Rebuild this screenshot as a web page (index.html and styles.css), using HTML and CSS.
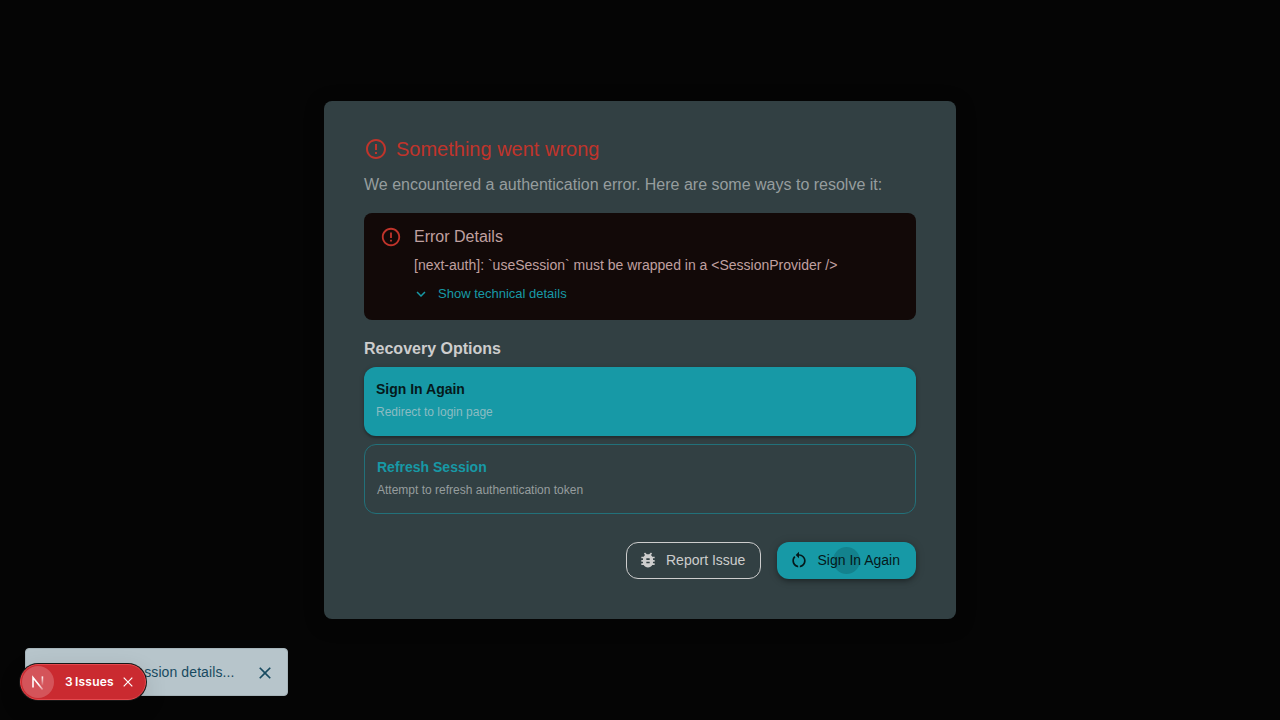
FILE: index.html
```
<!DOCTYPE html>
<html lang="en">
<head>
<meta charset="utf-8">
<title>Something went wrong</title>
<link rel="stylesheet" href="styles.css">
</head>
<body>
<main class="dialog">
  <h1 class="title">
    <svg class="title-icon" viewBox="0 0 24 24"><path d="M11 15h2v2h-2zm0-8h2v6h-2zm.99-5C6.47 2 2 6.48 2 12s4.47 10 9.99 10C17.52 22 22 17.52 22 12S17.52 2 11.99 2M12 20c-4.42 0-8-3.58-8-8s3.58-8 8-8 8 3.58 8 8-3.58 8-8 8"/></svg>
    <span>Something went wrong</span>
  </h1>
  <p class="lead">We encountered a authentication error. Here are some ways to resolve it:</p>
  <section class="alert">
    <svg class="alert-icon" viewBox="0 0 24 24"><path d="M11 15h2v2h-2zm0-8h2v6h-2zm.99-5C6.47 2 2 6.48 2 12s4.47 10 9.99 10C17.52 22 22 17.52 22 12S17.52 2 11.99 2M12 20c-4.42 0-8-3.58-8-8s3.58-8 8-8 8 3.58 8 8-3.58 8-8 8"/></svg>
    <div class="alert-body">
      <h2 class="alert-title">Error Details</h2>
      <p class="alert-text">[next-auth]: `useSession` must be wrapped in a &lt;SessionProvider /&gt;</p>
      <button class="details">
        <svg class="details-icon" viewBox="0 0 24 24"><path d="M16.59 8.59 12 13.17 7.41 8.59 6 10l6 6 6-6z"/></svg>
        <span>Show technical details</span>
      </button>
    </div>
  </section>
  <h2 class="options-title">Recovery Options</h2>
  <div class="options">
    <button class="option option-primary"><span class="option-name">Sign In Again</span><span class="option-note">Redirect to login page</span></button>
    <button class="option option-outlined"><span class="option-name">Refresh Session</span><span class="option-note">Attempt to refresh authentication token</span></button>
  </div>
  <footer class="actions">
    <button class="action report">
      <svg class="action-icon" viewBox="0 0 24 24"><path d="M20 8h-2.81c-.45-.78-1.07-1.45-1.82-1.96L17 4.41 15.59 3l-2.17 2.17C12.96 5.06 12.49 5 12 5s-.96.06-1.41.17L8.41 3 7 4.41l1.62 1.63C7.88 6.55 7.26 7.22 6.81 8H4v2h2.09c-.05.33-.09.66-.09 1v1H4v2h2v1c0 .34.04.67.09 1H4v2h2.81c1.04 1.79 2.97 3 5.19 3s4.15-1.21 5.19-3H20v-2h-2.09c.05-.33.09-.66.09-1v-1h2v-2h-2v-1c0-.34-.04-.67-.09-1H20zm-6 8h-4v-2h4zm0-4h-4v-2h4z"/></svg>
      <span>Report Issue</span>
    </button>
    <button class="action signin">
      <svg class="action-icon" viewBox="0 0 24 24"><path d="M12 5V2L8 6l4 4V7c3.31 0 6 2.69 6 6 0 2.97-2.17 5.43-5 5.91v2.02c3.95-.49 7-3.85 7-7.93 0-4.42-3.58-8-8-8m-6 8c0-1.65.67-3.15 1.76-4.24L6.34 7.34C4.9 8.79 4 10.79 4 13c0 4.08 3.05 7.44 7 7.93v-2.02c-2.83-.48-5-2.94-5-5.91"/></svg>
      <span>Sign In Again</span>
      <i class="ripple"></i>
    </button>
  </footer>
</main>
<aside class="toast">
  <span class="toast-text">ssion details...</span>
  <svg class="toast-close" viewBox="0 0 24 24"><path d="M19 6.41 17.59 5 12 10.59 6.41 5 5 6.41 10.59 12 5 17.59 6.41 19 12 13.41 17.59 19 19 17.59 13.41 12z"/></svg>
</aside>
<aside class="issues">
  <span class="issues-logo">
    <svg viewBox="0 0 32 32">
      <defs>
        <linearGradient id="diag" x1="17" y1="18" x2="22" y2="24" gradientUnits="userSpaceOnUse"><stop offset="0" stop-color="#fff"/><stop offset="1" stop-color="#fff" stop-opacity=".2"/></linearGradient>
        <linearGradient id="stem" x1="0" y1="10" x2="0" y2="20" gradientUnits="userSpaceOnUse"><stop offset="0" stop-color="#fff"/><stop offset="1" stop-color="#fff" stop-opacity="0"/></linearGradient>
      </defs>
      <path d="M11 21.5V11.6L20.6 23.6" fill="none" stroke="url(#diag)" stroke-width="1.6"/>
      <path d="M20.4 10.4v9" fill="none" stroke="url(#stem)" stroke-width="1.6"/>
    </svg>
  </span>
  <span class="issues-count">3</span><span class="issues-label">Issues</span>
  <svg class="issues-close" viewBox="0 0 10 10"><path d="M.7.7l8.6 8.6M9.3.7L.7 9.3" fill="none" stroke="#fff" stroke-width="1.2"/></svg>
</aside>
</body>
</html>
```
FILE: styles.css
```
* { box-sizing: border-box; }
body {
  margin: 0;
  height: 720px;
  overflow: hidden;
  display: flex;
  align-items: center;
  justify-content: center;
  background: #050505;
  font-family: "Liberation Sans", Arial, sans-serif;
  color: #cdcdcd;
}
h1, h2, p { margin: 0; font-weight: 400; }
button { font: inherit; margin: 0; border: 0; background: none; color: inherit; }
svg { fill: currentColor; display: block; flex: none; }
.dialog {
  width: 632px;
  height: 518px;
  padding: 32px 40px 40px;
  border-radius: 8px;
  background: #324043;
  box-shadow: 0 4px 20px rgba(0, 0, 0, .3);
}
.title { display: flex; align-items: center; gap: 8px; font-size: 20px; line-height: 32px; color: #c0342b; }
.title-icon { width: 24px; height: 24px; }
.lead { margin: 8px 0 16px; font-size: 16px; line-height: 24px; color: #969d9e; white-space: nowrap; }
.alert {
  display: flex;
  height: 107px;
  padding: 6px 16px;
  gap: 12px;
  border-radius: 8px;
  background: #120908;
  color: #c0a0a0;
}
.alert-icon { width: 22px; height: 22px; margin-top: 7px; color: #c0342b; }
.alert-body { padding-top: 6px; }
.alert-title { font-size: 16px; line-height: 24px; }
.alert-text { margin-top: 6px; font-size: 14px; line-height: 20px; }
.details { display: flex; align-items: center; height: 22px; margin-top: 7px; padding: 0; margin-left: -2px; gap: 8px; font-size: 13px; color: #1799a6; }
.details-icon { width: 18px; height: 18px; margin-top: 2px; }
.options-title { margin: 16px 0 6px; font-size: 16px; line-height: 25px; font-weight: 700; }
.options { display: grid; gap: 8px; }
.option { display: flex; flex-direction: column; align-items: flex-start; border-radius: 12px; text-align: left; }
.option-primary { height: 69px; padding: 11px 12px; background: #1799a6; box-shadow: 0 1px 5px rgba(0, 0, 0, .2), 0 2px 2px rgba(0, 0, 0, .2); }
.option-outlined { height: 70px; padding: 11px 12px; border: 1px solid #22717a; }
.option-name { font-size: 14px; line-height: 22px; font-weight: 700; }
.option-primary .option-name { color: #05191b; }
.option-outlined .option-name { color: #1799a6; }
.option-note { margin-top: 3px; font-size: 12px; line-height: 18px; color: #969d9e; }
.option-primary .option-note { color: #8bbcc2; }
.actions { display: flex; justify-content: flex-end; gap: 16px; margin-top: 28px; }
.action { display: flex; align-items: center; height: 37px; gap: 8px; font-size: 14px; border-radius: 12px; }
.action-icon { width: 20px; height: 20px; }
.report { width: 135px; padding: 0 0 1px 11px; border: 1px solid #cdcdcd; }
.signin {
  position: relative;
  width: 139px;
  padding: 0 0 1px 12px;
  gap: 8.5px;
  background: #1799a6;
  color: #05191b;
  box-shadow: 0 3px 5px -1px rgba(0, 0, 0, .3), 0 1px 10px rgba(0, 0, 0, .2);
}
.ripple { position: absolute; left: 56px; top: 5px; width: 27px; height: 27px; border-radius: 50%; background: rgba(5, 25, 27, .18); }
.toast {
  position: absolute;
  left: 25px;
  top: 648px;
  width: 263px;
  height: 48px;
  display: flex;
  align-items: center;
  justify-content: flex-end;
  gap: 20.5px;
  padding-right: 12px;
  border-radius: 4px;
  background: #b7c5cb;
  border: 1px solid #a6b4ba;
  color: #174a60;
  font-size: 14px;
  letter-spacing: .1px;
}
.toast-close { width: 20px; height: 20px; margin-top: 2px; }
.issues {
  position: absolute;
  left: 20px;
  top: 664px;
  width: 126px;
  height: 36px;
  display: flex;
  align-items: center;
  padding: 1px;
  border: 1px solid #e5484d;
  border-radius: 18px;
  background: #ca2a30;
  color: #fff;
  font: 600 12px/16px Inter, sans-serif;
  letter-spacing: .25px;
  box-shadow: 0 0 0 1px #171717, 0 8px 24px rgba(0, 0, 0, .14);
}
.issues-logo { flex: none; width: 32px; height: 32px; border-radius: 50%; background: #d4545a; }
.issues-count { margin-left: 11px; }
.issues-label { margin-left: 2px; }
.issues-close { width: 10px; height: 10px; margin-left: 9px; }
```
